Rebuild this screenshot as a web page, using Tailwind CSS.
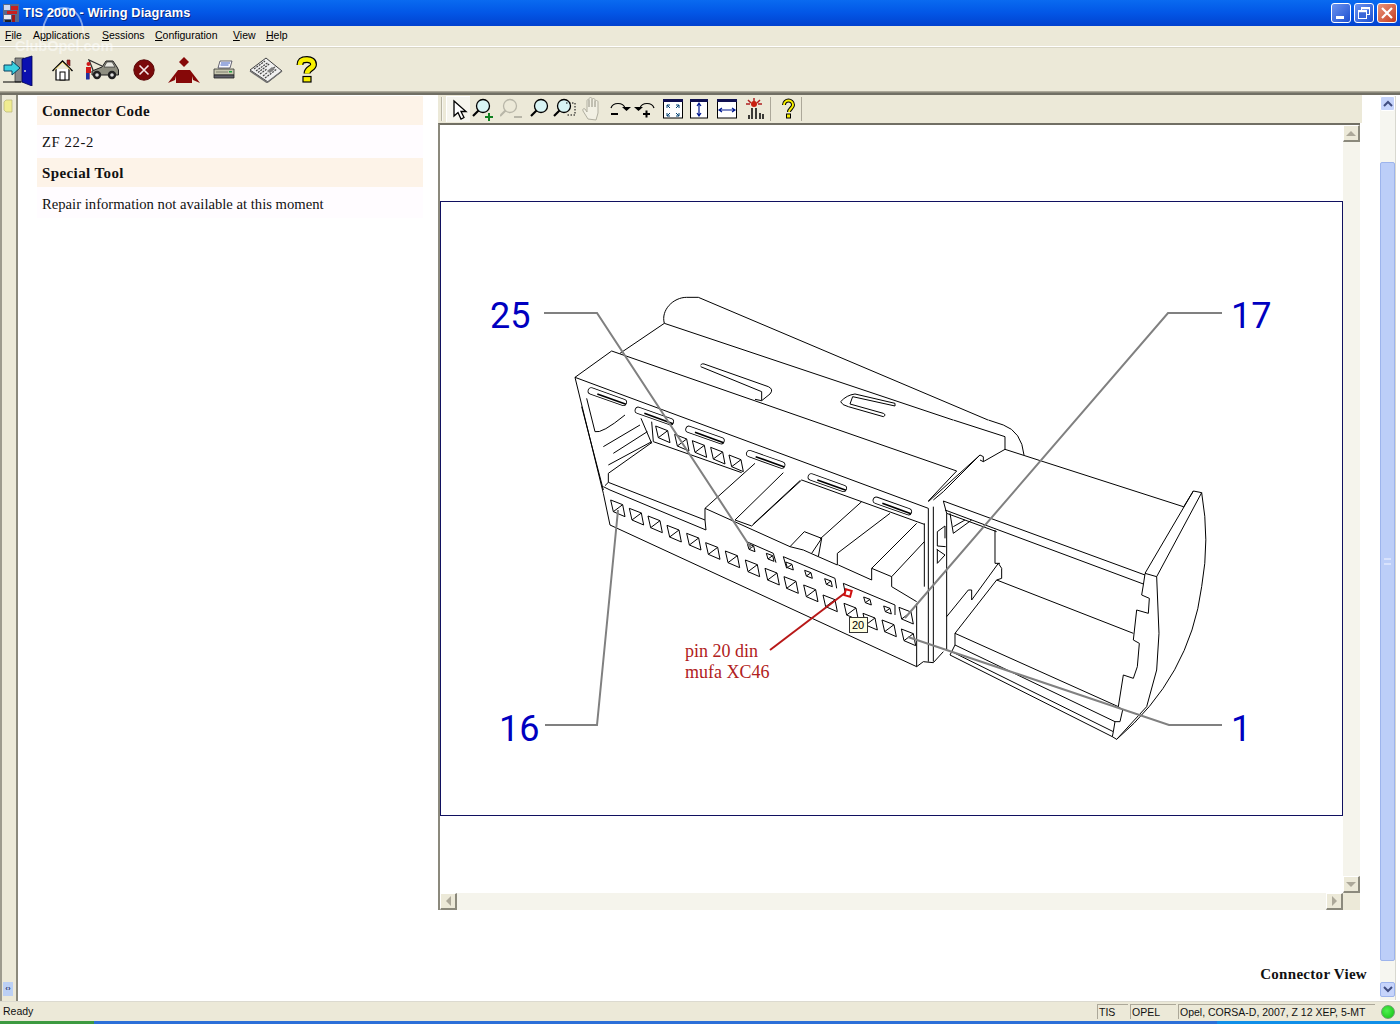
<!DOCTYPE html>
<html>
<head>
<meta charset="utf-8">
<script src="https://cdn.jsdelivr.net/npm/@tailwindcss/browser@4"></script>
<title>TIS 2000 - Wiring Diagrams</title>
</head>
<body class="relative w-[1400px] h-[1024px] overflow-hidden bg-white font-['Liberation_Sans',sans-serif]">
<div class="flex flex-col h-[1024px]">

<!-- title bar -->
<div class="h-[26px] flex items-center bg-gradient-to-b from-[#0a6af0] via-[#0356e6] to-[#0242cf] shrink-0">
  <svg class="ml-[2px] w-[18px] h-[20px]" viewBox="0 0 18 20">
    <rect x="1" y="1" width="16" height="18" fill="#5a6a8a"/>
    <rect x="2" y="2" width="6" height="5" fill="#d0d8f0"/>
    <rect x="9" y="3" width="7" height="4" fill="#c82020"/>
    <rect x="5" y="8" width="10" height="3" fill="#c82020"/>
    <rect x="2" y="12" width="7" height="4" fill="#e8e8f0"/>
    <rect x="10" y="12" width="3" height="7" fill="#a01818"/>
    <rect x="3" y="17" width="6" height="2" fill="#202020"/>
  </svg>
  <span class="ml-[3px] text-white font-bold text-[12.800px] tracking-[0.1px] [text-shadow:1px_1px_0_#0a2a80]">TIS 2000 - Wiring Diagrams</span>
  <div class="ml-auto mr-[3px] flex gap-[3px]">
    <div class="w-[20px] h-[20px] rounded-[3px] border border-white bg-gradient-to-br from-[#6d93ef] to-[#1c4ed0] relative flex items-end pb-[3px] pl-[4px]"><div class="w-[8px] h-[3px] bg-white"></div></div>
    <div class="w-[20px] h-[20px] rounded-[3px] border border-white bg-gradient-to-br from-[#6d93ef] to-[#1c4ed0] flex items-center justify-center">
      <svg class="w-[12px] h-[12px]" viewBox="0 0 12 12" fill="none" stroke="#fff"><rect x="3.500" y=".5" width="8" height="7"/><path d="M3.500 1.500h8" stroke-width="1.500"/><rect x=".5" y="3.500" width="8" height="8" fill="#3a66d8"/><path d="M.5 4.500h8" stroke-width="1.500"/></svg>
    </div>
    <div class="w-[20px] h-[20px] rounded-[3px] border border-white bg-gradient-to-br from-[#e9947c] to-[#c43a1a] flex items-center justify-center">
      <svg class="w-[14px] h-[14px]" viewBox="0 0 14 14" stroke="#fff" stroke-width="2.200"><path d="M2 2l10 10M12 2L2 12"/></svg>
    </div>
  </div>
</div>

<!-- menu bar -->
<div class="h-[20px] bg-[#ece9d8] flex items-center text-[10.500px] text-black shrink-0 pl-[5px]">
  <span class="w-[28px]"><u>F</u>ile</span>
  <span class="w-[69px]">A<u>p</u>plications</span>
  <span class="w-[53px]"><u>S</u>essions</span>
  <span class="w-[78px]"><u>C</u>onfiguration</span>
  <span class="w-[33px]"><u>V</u>iew</span>
  <span><u>H</u>elp</span>
</div>
<div class="h-[1px] bg-white shrink-0"></div>

<!-- main toolbar -->
<div class="h-[44px] bg-[#ece9d8] flex items-center shrink-0 border-t border-[#d8d5c4]">
  <svg class="ml-[3px] w-[30px] h-[32px]" viewBox="0 0 30 32">
    <path d="M12 4h9v24h-9z" fill="#8a8a8a" stroke="#404040" stroke-width=".8"/>
    <path d="M19 5l10-3v30l-10-4z" fill="#0a10b0" stroke="#000050" stroke-width=".8"/>
    <circle cx="22" cy="17" r="1" fill="#d0d0d0"/>
    <path d="M1 11h8V7l8 7-8 7v-4H1z" fill="#3ad0e0" stroke="#0a4060"/>
    <path d="M0 28h18" stroke="#000"/>
  </svg>
  <svg class="ml-[19px] w-[21px] h-[22px]" viewBox="0 0 21 22">
    <path d="M15 1h3v6l-3-2z" fill="#b02020" stroke="#501010" stroke-width=".6"/>
    <path d="M4 10v11h13V10" fill="#fff" stroke="#000" stroke-width="1.200"/>
    <path d="M.5 12L10.500 2l10 10" fill="none" stroke="#000" stroke-width="1.400"/>
    <path d="M2.500 11L10.500 3.500l8 7.500" fill="none" stroke="#f0d870" stroke-width="1"/>
    <rect x="8" y="13" width="5" height="8" fill="#fff" stroke="#000"/>
  </svg>
  <svg class="ml-[12px] w-[34px] h-[22px]" viewBox="0 0 34 22">
    <path d="M7 12L17 8l4-6h7l4 6 1.500 3v5H7z" fill="#8e8e80" stroke="#202020"/>
    <path d="M19 8l3-5h5l3 5z" fill="#e8e8e0" stroke="#202020" stroke-width=".6"/>
    <path d="M8 11L4 1l13 6" fill="none" stroke="#303030" stroke-width="1.300"/>
    <circle cx="12" cy="16" r="4.200" fill="#202020"/><circle cx="12" cy="16" r="1.800" fill="#ddd"/>
    <circle cx="27" cy="16" r="4.200" fill="#202020"/><circle cx="27" cy="16" r="1.800" fill="#ddd"/>
    <circle cx="3.500" cy="5" r="2" fill="#d01818"/>
    <path d="M1 8h5v6H4.500v6H1z" fill="#d01818"/>
    <path d="M1 14h3.500v6.500H1z" fill="#2030a0"/>
  </svg>
  <svg class="ml-[14px] w-[22px] h-[22px]" viewBox="0 0 22 22">
    <circle cx="11" cy="11" r="10.200" fill="#7a0a0a" stroke="#5a0808"/>
    <path d="M6.500 6.500l9 9M15.500 6.500l-9 9" stroke="#f4e8e8" stroke-width="1.600"/>
  </svg>
  <svg class="ml-[13px] w-[32px] h-[28px]" viewBox="0 0 32 28">
    <path d="M16 1l5 5-5 5-5-5z" fill="#860808"/>
    <path d="M10 14H22L32 27L25 24L24 20V27H8V20L7 24L0 27Z" fill="#860808"/>
  </svg>
  <svg class="ml-[13px] w-[22px] h-[20px]" viewBox="0 0 22 20">
    <path d="M7 1h12l-2 7H5z" fill="#f8f8ff" stroke="#404050" stroke-width=".8"/>
    <path d="M8 3h9M7.500 5h8" stroke="#4060c0"/>
    <path d="M1 9h20v6H1z" fill="#c8c8b0" stroke="#303030" stroke-width=".8"/>
    <path d="M1 15h20v3H1z" fill="#60606a" stroke="#202020" stroke-width=".8"/>
    <path d="M3 12h12" stroke="#808070"/><rect x="16" y="11" width="3" height="1.500" fill="#20a040"/>
  </svg>
  <svg class="ml-[14px] w-[34px] h-[26px]" viewBox="0 0 34 26">
    <path d="M1 13L17 1l16 13-14 11z" fill="#f0f0f0" stroke="#404040"/>
    <path d="M1 14l17 11.500L33 14" fill="none" stroke="#707070" stroke-width="1.500"/>
    <path d="M5 12L16 4M7 14L19 5.500M9 15.500l12-9M11 17l7-5M14 19l5-4M22 13l5-4M16 21l12-9" stroke="#444" stroke-width="1.200" stroke-dasharray="2 1"/>
    <path d="M18 14l5-4 3 2-5 4z" fill="#808080"/>
  </svg>
  <svg class="ml-[12px] w-[23px] h-[27px]" viewBox="0 0 23 27">
    <path d="M5 9C5 4 8 3.500 12 3.500c4 0 6.500 2 6.500 5 0 4-6.500 4-6.500 9" fill="none" stroke="#000" stroke-width="7"/>
    <path d="M5 9C5 4 8 3.500 12 3.500c4 0 6.500 2 6.500 5 0 4-6.500 4-6.500 9" fill="none" stroke="#f8f000" stroke-width="4.600"/>
    <rect x="8" y="20.500" width="8" height="5.500" fill="#f8f000" stroke="#000" stroke-width="1.200"/>
  </svg>
</div>
<div class="h-[4px] shrink-0 bg-[#8b897c] border-t border-[#aca899] border-b-2 border-b-[#716f64]"></div>

<!-- body -->
<div class="flex h-[906px] shrink-0">
  <!-- collapse strip -->
  <div class="w-[18px] shrink-0 bg-[#ece9d8] border-l-2 border-l-[#9d9b8e] border-r-2 border-r-[#8b897c] flex flex-col items-center pt-[4px] pb-[5px] h-[906px]">
    <svg class="w-[10px] h-[14px] -ml-[2px]" viewBox="0 0 10 14"><path d="M3 1h6v12H3L1 11V3z" fill="#f0ec90" stroke="#b8b478" stroke-width=".7"/></svg>
    <div class="mt-auto -ml-[2px] w-[10px] h-[14px] bg-[#bcd0f4] text-[8px] leading-[14px] text-center font-bold text-[#333c70]">‹›</div>
  </div>

  <!-- left info pane -->
  <div class="w-[418px] shrink-0 pl-[19px] pt-[1px] font-['Liberation_Serif',serif] text-[#111]">
    <div class="w-[386px]">
      <div class="h-[29px] bg-[#fdf3e8] pl-[5px] pt-[1px] flex items-center text-[15px] font-bold tracking-[0.25px]">Connector Code</div>
      <div class="h-[33px] bg-[#fffcff] pl-[5px] pt-[1px] flex items-center text-[14.670px] tracking-[0.6px]">ZF 22-2</div>
      <div class="h-[29px] bg-[#fdf3e8] pl-[5px] pt-[1px] flex items-center text-[15px] font-bold tracking-[0.4px]">Special Tool</div>
      <div class="h-[31px] bg-[#fffcff] pl-[5px] pt-[3px] flex items-center text-[14.670px]">Repair information not available at this moment</div>
    </div>
  </div>

  <!-- right content -->
  <div class="flex-1 flex flex-col relative">
    <div class="ml-[2px] w-[924px] bg-[#ece9d8] h-[28px] flex items-center shrink-0">
      <div class="ml-[3px] w-[2px] h-[24px] border-l border-[#b8b5a4] bg-white/60"></div>
      <!-- arrow -->
      <div class="ml-[3px] w-[24px] h-[26px] bg-[#f6f5ee] border-l border-t border-white flex items-center justify-center">
        <svg class="w-[18px] h-[22px]" viewBox="0 0 18 22"><path d="M4 2v15l4-3.500 3 6.500 3-1.500-3-6h5z" fill="#fff" stroke="#000" stroke-width="1.300"/></svg>
      </div>
      <svg class="ml-[1px] w-[24px] h-[24px]" viewBox="0 0 24 24" fill="none"><circle cx="12" cy="9" r="6.500" fill="#d8f4f4" stroke="#000" stroke-width="1.300"/><path d="M7.500 13.500L2 19" stroke="#000" stroke-width="2.200"/><path d="M14 20h8M18 16v8" stroke="#108020" stroke-width="2"/></svg>
      <svg class="ml-[5px] w-[24px] h-[24px]" viewBox="0 0 24 24" fill="none"><circle cx="10" cy="9" r="6.500" stroke="#b8b6a8" stroke-width="1.300"/><path d="M5.500 13.500L0 19" stroke="#b8b6a8" stroke-width="2.200"/><path d="M14 20h8" stroke="#b8b6a8" stroke-width="2"/></svg>
      <svg class="ml-[3px] w-[24px] h-[24px]" viewBox="0 0 24 24" fill="none"><circle cx="14" cy="9" r="6.500" fill="#d8f4f4" stroke="#000" stroke-width="1.300"/><path d="M9.500 13.500L4 19" stroke="#000" stroke-width="2.200"/></svg>
      <svg class="ml-[2px] w-[24px] h-[24px]" viewBox="0 0 24 24" fill="none"><circle cx="11" cy="9" r="6.500" fill="#d8f4f4" stroke="#000" stroke-width="1.300"/><path d="M6.500 13.500L1 19" stroke="#000" stroke-width="2.200"/><path d="M13 6h9v12h-9" stroke="#000" stroke-dasharray="1.500 1.500"/></svg>
      <svg class="ml-[3px] w-[24px] h-[24px]" viewBox="0 0 24 24" fill="none" stroke="#b0aea0"><path d="M8 22l-5-8c-1-2 1-3 2-2l2 3V4c0-2 2-2 2 0v6-8c0-2 3-2 3 0v8-7c0-2 3-2 3 0v7-5c0-2 3-2 3 0v11l-2 7z" fill="#f2f0e4"/></svg>
      <svg class="ml-[4px] w-[24px] h-[24px]" viewBox="0 0 24 24" fill="none"><path d="M3 11c2-6 12-6 14 0" stroke="#000" stroke-width="1.200"/><path d="M14 10h9l-4.500 4z" fill="#000"/><path d="M3 17h7" stroke="#000" stroke-width="2"/></svg>
      <svg class="ml-[1px] w-[24px] h-[24px]" viewBox="0 0 24 24" fill="none"><path d="M7 11c2-6 12-6 14 0" stroke="#000" stroke-width="1.200"/><path d="M1 10h9l-4.500 4z" fill="#000"/><path d="M10 17h7M13.500 13.500v7" stroke="#000" stroke-width="2"/></svg>
      <svg class="ml-[4px] w-[24px] h-[24px]" viewBox="0 0 24 24" fill="none"><rect x="2.500" y="3" width="19" height="18" fill="#fff" stroke="#000"/><rect x="2" y="2" width="20" height="3" fill="#101050"/><path d="M6 8l3 3M6 8v3M6 8h3M18 8l-3 3M18 8v3M18 8h-3M6 19l3-3M6 19v-3M6 19h3M18 19l-3-3M18 19v-3M18 19h-3" stroke="#004070"/></svg>
      <svg class="ml-[2px] w-[24px] h-[24px]" viewBox="0 0 24 24" fill="none"><rect x="3.500" y="3" width="17" height="18" fill="#fff" stroke="#000"/><rect x="3" y="2" width="18" height="3" fill="#101050"/><path d="M12 7v11M10 9l2-3 2 3M10 16l2 3 2-3" stroke="#001890" stroke-width="1.200"/></svg>
      <svg class="ml-[4px] w-[24px] h-[24px]" viewBox="0 0 24 24" fill="none"><rect x="2.500" y="3" width="19" height="18" fill="#fff" stroke="#000"/><rect x="2" y="2" width="20" height="3" fill="#101050"/><path d="M5 13h14M7 11l-3 2 3 2M17 11l3 2-3 2" stroke="#001890" stroke-width="1.200"/></svg>
      <svg class="ml-[3px] w-[24px] h-[24px]" viewBox="0 0 24 24" fill="none"><path d="M6 3l3 3M12 1v4M18 3l-3 3M4 7h4M16 7h4" stroke="#b02020" stroke-width="1.500"/><circle cx="12" cy="7" r="3" fill="#c82010"/><path d="M10 22v-11M14 22v-11M18 16v6M21 17v5M7 18v4" stroke="#000" stroke-width="1.500"/></svg>
      <div class="ml-[4px] w-[1px] h-[24px] bg-[#aca899]"></div>
      <svg class="ml-[5px] w-[24px] h-[24px]" viewBox="0 0 24 24" fill="none"><path d="M8 8c0-6 9-6 9 0 0 3-4 4-4 7" stroke="#000" stroke-width="4"/><path d="M8 8c0-6 9-6 9 0 0 3-4 4-4 7" stroke="#f8f000" stroke-width="2"/><rect x="10.500" y="17" width="4" height="4" fill="#f8f000" stroke="#000"/></svg>
      <div class="ml-[1px] w-[1px] h-[24px] bg-[#aca899]"></div>
    </div>

    <!-- drawing area -->
    <div class="ml-[2px] w-[922px] h-[787px] flex flex-col shrink-0 border-t-2 border-l-2 border-t-[#716f64] border-l-[#8b897c]">
      <div class="flex h-[768px]">
        <div class="w-[903px] bg-white pt-[76px]">
          <svg class="block w-[903px] h-[615px] border border-[#101060]" viewBox="441 202 901 613" fill="none" stroke="#000">
            <defs>
              <g id="cell" fill="none" stroke="#000" stroke-width="3"><path d="M-21-25L15-11l7 36-35-15zM-13 10L15-11"/></g>
              <g id="scell" fill="none" stroke="#000" stroke-width="3"><path d="M-11-12L8-5l4 17-18-7zM-6 5L8-5"/></g>
              <g id="slot" fill="none"><path d="M-48-17L48 17" stroke="#000" stroke-width="22" stroke-linecap="round"/><path d="M-48-17L48 17" stroke="#fff" stroke-width="17" stroke-linecap="round"/><path d="M-30-8L56 23" stroke="#000" stroke-width="5"/></g>
            </defs>

            <!-- left body: coordinates of a 3x view -->
            <g transform="translate(570 290) scale(.33333)" stroke-width="3" stroke-linejoin="round">
              <path d="M283 100C272 60 310 22 350 22L385 22L1254 390"/>
              <path d="M283 100L1149 390M283 100L150 190"/>
              <path d="M15 262L125 183L1160 543L1075 633"/>
              <path d="M15 262L1075 655L1075 1115M1090 650L1090 1115"/>
              <path d="M15 262L100 610L120 705L1040 1130L1040 940"/>
              <path d="M1040 1130L1060 1115L1090 1118L1120 1085"/>
              <path d="M392 226Q395 218 408 224L595 290Q612 298 600 312L575 332L555 328M392 230L575 305L575 332"/>
              <path d="M975 340L855 312Q830 315 812 335Q815 345 835 350L940 380Q950 375 940 370L840 342L848 320L975 348Z"/>
              <use href="#slot" x="112" y="320"/><use href="#slot" x="253" y="378"/><use href="#slot" x="405" y="435"/>
              <use href="#slot" x="587" y="508"/><use href="#slot" x="772" y="578"/><use href="#slot" x="967" y="648"/>
              <path d="M35 350L100 600M50 325L75 425Q95 432 165 375M100 470L210 405M130 490L232 425M115 525L245 455M115 550V577M115 550L245 458M213 385L245 460M245 395L250 455L515 548"/>
              <path d="M105 587L115 577L405 690L408 720L120 600L100 590"/>
              <path d="M405 690V655L555 520M495 690L640 548M545 708L695 570M550 702L690 572M495 690L545 708M695 570L1063 703"/>
              <path d="M405 655L660 770L703 725L755 745L745 800L700 780L660 770M725 790L755 745M750 747L875 635M745 800L802 825V790L960 670M805 825L905 870V835L965 860V890L1040 935M905 835L1040 700M965 860L1063 755M1063 700V890"/>
              <use href="#cell" x="143" y="655"/><use href="#cell" x="199" y="680"/><use href="#cell" x="255" y="703"/>
              <use href="#cell" x="312" y="731"/><use href="#cell" x="371" y="755"/><use href="#cell" x="428" y="783"/>
              <use href="#cell" x="487" y="808"/><use href="#cell" x="547" y="835"/><use href="#cell" x="606" y="860"/>
              <use href="#cell" x="663" y="885"/><use href="#cell" x="722" y="910"/><use href="#cell" x="780" y="940"/>
              <use href="#cell" x="843" y="965"/><use href="#cell" x="900" y="995"/><use href="#cell" x="957" y="1015"/>
              <use href="#cell" x="1008" y="977"/><use href="#cell" x="1015" y="1042"/>
              <use href="#cell" x="278" y="433"/><use href="#cell" x="335" y="458"/><use href="#cell" x="388" y="477"/>
              <use href="#cell" x="443" y="497"/><use href="#cell" x="498" y="520"/>
              <use href="#scell" x="543" y="773"/><use href="#scell" x="600" y="802"/><use href="#scell" x="658" y="828"/>
              <use href="#scell" x="715" y="853"/><use href="#scell" x="775" y="878"/><use href="#scell" x="892" y="933"/><use href="#scell" x="952" y="960"/>
              <path d="M530 755L610 790L618 818M640 800L795 865L800 895M640 800L650 835M820 880L975 945V975M820 880L825 905"/>
            </g>

            <!-- right body -->
            <g transform="translate(900 420) scale(.33333)" stroke-width="3" stroke-linejoin="round">
              <path d="M265 0L310 15Q365 35 372 105"/>
              <path d="M160 0L315 50L315 88L250 125L250 110L240 105L85 245M240 120L250 125"/>
              <path d="M130 215L240 105M100 240L130 215"/>
              <path d="M315 88L850 260M130 243L735 465M135 270L730 492M140 280L290 335"/>
              <path d="M130 243L140 280L140 690M850 262L880 213L905 218Q930 360 905 500Q870 770 650 958L637 950"/>
              <path d="M880 213L735 460L770 470L905 218M770 470L777 640L770 750L740 860L650 958"/>
              <path d="M735 462L730 495L725 525L748 535L745 580L710 570L700 660L718 670L712 740L700 775L670 765L655 860L668 870L660 905L645 905L640 935L637 950"/>
              <path d="M290 480L700 640M165 640L290 480M165 640L655 860M165 675L645 905M155 695L640 935M165 640V675L155 695L150 705L637 950"/>
              <path d="M140 590L205 510L215 510V540L295 430L305 445V475L290 480M285 330V430L300 430"/>
              <path d="M112 335V378L137 380M112 335L135 318V355M110 388L135 405L112 430V388M150 280L160 340L215 300M160 320L195 300"/>
            </g>

            <!-- callouts -->
            <g stroke="#808080" stroke-width="2">
              <path d="M544 313H597L751 548"/>
              <path d="M1222 313H1168L905 618"/>
              <path d="M545 725H597L618 510"/>
              <path d="M1222 725H1169L908 637"/>
            </g>
            <g fill="#0000c0" stroke="none" font-family="Roboto" font-size="36">
              <text x="490" y="328">25</text>
              <text x="1231" y="328">17</text>
              <text x="499" y="741">16</text>
              <text x="1231" y="741">1</text>
            </g>
            <path d="M770 650L845 593" stroke="#b81818" stroke-width="2"/>
            <rect x="845" y="590" width="6" height="6" stroke="#d01010" stroke-width="2" transform="rotate(15 848 593)"/>
            <g fill="#b02020" stroke="none" font-family="Liberation Serif" font-size="18">
              <text x="685" y="657">pin 20 din</text>
              <text x="685" y="678">mufa XC46</text>
            </g>
            <rect x="849.500" y="617.500" width="18" height="15" fill="#ffffe1" stroke="#333"/>
            <text x="852" y="629" fill="#000" stroke="none" font-family="Liberation Sans" font-size="11">20</text>
          </svg>
        </div>
        <!-- pane vertical scrollbar -->
        <div class="w-[17px] flex flex-col bg-[#f5f4ec]">
          <div class="h-[17px] bg-[#ece9d8] border-r-2 border-b-2 border-[#8b897c] border-t border-l border-t-white border-l-white flex items-center justify-center"><div class="w-0 h-0 border-x-[5px] border-x-transparent border-b-[5px] border-b-[#aca899]"></div></div>
          <div class="flex-1"></div>
          <div class="h-[17px] bg-[#ece9d8] border-r-2 border-b-2 border-[#8b897c] border-t border-l border-t-white border-l-white flex items-center justify-center"><div class="w-0 h-0 border-x-[5px] border-x-transparent border-t-[5px] border-t-[#aca899]"></div></div>
        </div>
      </div>
      <!-- pane horizontal scrollbar -->
      <div class="flex h-[17px] bg-[#f5f4ec]">
        <div class="w-[17px] bg-[#ece9d8] border-r-2 border-b-2 border-[#8b897c] border-t border-l border-t-white border-l-white flex items-center justify-center"><div class="w-0 h-0 border-y-[5px] border-y-transparent border-r-[5px] border-r-[#aca899]"></div></div>
        <div class="flex-1"></div>
        <div class="w-[17px] bg-[#ece9d8] border-r-2 border-b-2 border-[#8b897c] border-t border-l border-t-white border-l-white flex items-center justify-center"><div class="w-0 h-0 border-y-[5px] border-y-transparent border-l-[5px] border-l-[#aca899]"></div></div>
        <div class="w-[17px] bg-[#ece9d8]"></div>
      </div>
    </div>

    <div class="flex-1 flex justify-end items-end pb-[16px] w-[931px]">
      <span class="font-['Liberation_Serif',serif] font-bold text-[15px] tracking-[0.3px] text-[#111]">Connector View</span>
    </div>
  </div>

  <!-- main scrollbar -->
  <div class="w-[16px] h-[904px] mt-[1px] mr-[4px] bg-[#f6f6f0] flex flex-col shrink-0 border-r border-[#d8d8d0]">
    <div class="h-[15px] rounded-[2px] bg-[#c6d4fb] border border-white flex items-center justify-center">
      <svg class="w-[10px] h-[7px]" viewBox="0 0 10 7" fill="none" stroke="#404d80" stroke-width="2"><path d="M1 6l4-4 4 4"/></svg>
    </div>
    <div class="h-[51px]"></div>
    <div class="h-[799px] bg-[#bccef8] rounded-[2px] border border-[#9db4ec] flex items-center justify-center"><div class="w-[7px] h-[7px] border-y-2 border-[#d8e2fc]"></div></div>
    <div class="h-[21px]"></div>
    <div class="h-[15px] rounded-[2px] bg-[#c6d4fb] border border-[#9db4ec] flex items-center justify-center">
      <svg class="w-[10px] h-[7px]" viewBox="0 0 10 7" fill="none" stroke="#404d80" stroke-width="2"><path d="M1 1l4 4 4-4"/></svg>
    </div>
  </div>
</div>

<div class="h-[1px] bg-[#dcdad0] shrink-0"></div>
<!-- status bar -->
<div class="h-[19px] bg-[#ece9d8] flex items-center text-[10.500px] text-[#111] shrink-0">
  <span class="ml-[3px] mt-[1px]">Ready</span>
  <div class="ml-auto flex items-center">
    <div class="w-[31px] h-[15px] border-l border-t border-[#aca899] pl-[1px] leading-[14px]">TIS</div>
    <div class="ml-[2px] w-[46px] h-[15px] border-l border-t border-[#aca899] pl-[1px] leading-[14px]">OPEL</div>
    <div class="ml-[2px] w-[197px] h-[15px] border-l border-t border-[#aca899] pl-[1px] leading-[14px] whitespace-nowrap">Opel, CORSA-D, 2007, Z 12 XEP, 5-MT</div>
    <div class="ml-[6px] mr-[5px] w-[14px] h-[14px] rounded-full bg-[radial-gradient(circle_at_40%_40%,#50f050,#10c010)] border border-[#70a070]"></div>
  </div>
</div>
<!-- taskbar edge -->
<div class="flex-1 flex">
  <div class="w-[94px] bg-[#3c9a40]"></div>
  <div class="w-[1123px] bg-[#2c6fd8]"></div>
  <div class="flex-1 bg-[#108ee8]"></div>
</div>
</div>

<!-- watermark over the title and menu -->
<div class="absolute left-[14px] top-[5px] w-[104px] h-[50px] pointer-events-none">
  <svg class="absolute left-[24px] top-[1px] w-[50px] h-[32px]" viewBox="0 0 50 36" fill="none" stroke="#fff" stroke-opacity=".5" stroke-width="2"><path d="M2 34C2 12 14 2 26 2c12 0 22 10 22 32"/></svg>
  <span class="absolute left-[1px] top-[31px] text-[14.500px] font-bold text-white/50 whitespace-nowrap">ClubOpel.com</span>
</div>
</body>
</html>
